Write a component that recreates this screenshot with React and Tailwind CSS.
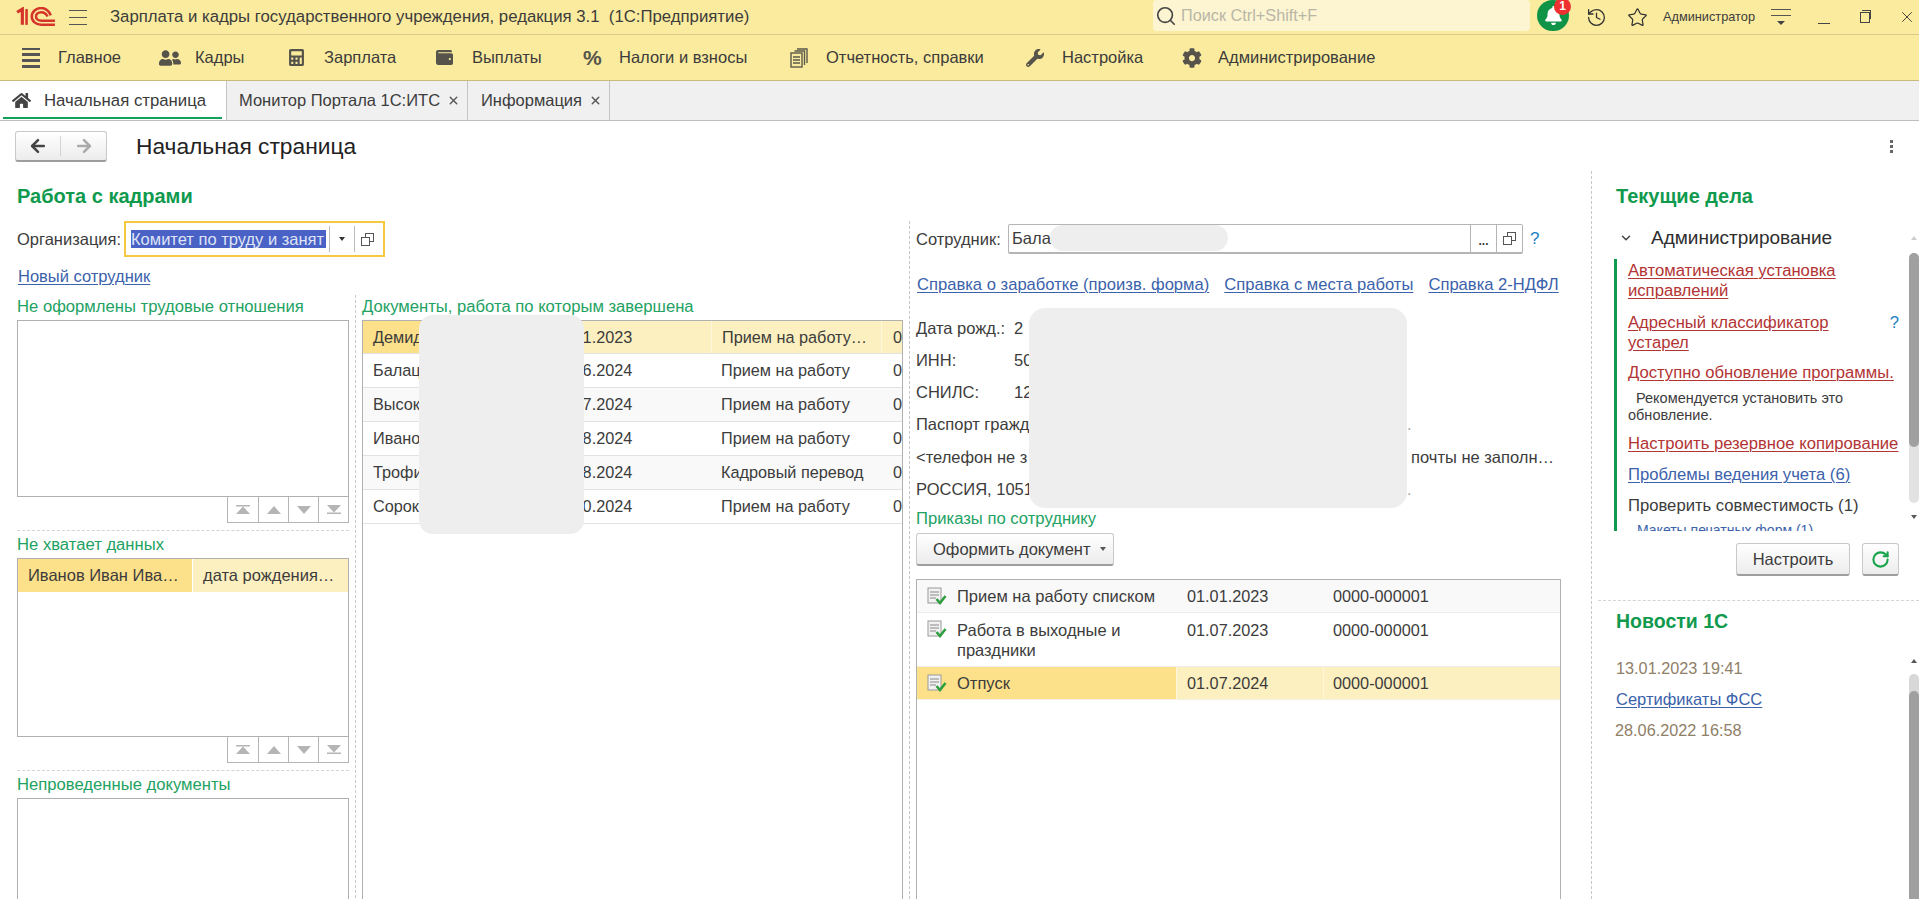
import React from 'react';
import { FaUserFriends, FaCalculator, FaWallet, FaWrench, FaCog, FaHome, FaBell } from 'react-icons/fa';
import { History, Star, Search, X, ArrowLeft, ArrowRight, RotateCw, ChevronDown } from 'lucide-react';

const sections = [
  { label: 'Главное', w: 'w-[159px]', icon: <Burger /> },
  { label: 'Кадры', w: 'w-[129px]', icon: <FaUserFriends size={22} /> },
  { label: 'Зарплата', w: 'w-[148px]', icon: <FaCalculator size={17} /> },
  { label: 'Выплаты', w: 'w-[147px]', icon: <FaWallet size={17} /> },
  { label: 'Налоги и взносы', w: 'w-[207px]', icon: <span className="text-[21px] font-bold leading-none">%</span> },
  { label: 'Отчетность, справки', w: 'w-[236px]', icon: <ReportIcon /> },
  { label: 'Настройка', w: 'w-[156px]', icon: <FaWrench size={18} /> },
  { label: 'Администрирование', w: 'w-[220px]', icon: <FaCog size={20} /> },
];

const finished = [
  ['Демид', '01.01.2023', 'Прием на работу…'],
  ['Балац', '01.06.2024', 'Прием на работу'],
  ['Высок', '01.07.2024', 'Прием на работу'],
  ['Иванов', '01.08.2024', 'Прием на работу'],
  ['Трофи', '01.08.2024', 'Кадровый перевод'],
  ['Сорок', '01.10.2024', 'Прием на работу'],
];

function Burger() {
  return (
    <div className="flex flex-col gap-[3px] w-[18px]">
      <div className="h-[2px] bg-[#555]" />
      <div className="h-[3px] bg-[#555]" />
      <div className="h-[3px] bg-[#555]" />
      <div className="h-[3px] bg-[#555]" />
    </div>
  );
}

function ReportIcon() {
  return (
    <svg width="18" height="20" viewBox="0 0 18 20" fill="none" stroke="#5c5a4c" strokeWidth="1.4">
      <path d="M7 1h10v14M4.5 3h10v14" />
      <rect x="1" y="5" width="11" height="14" fill="#fbeb9e" />
      <path d="M3 9h7M3 12h7M3 15h7" />
    </svg>
  );
}

function Logo1C() {
  return (
    <svg width="40" height="21" viewBox="0 0 38 20" fill="none" stroke="#d4342a" strokeWidth="2.4">
      <path d="M1 5l5-3v15" strokeWidth="3" />
      <path d="M10 2v15" />
      <path d="M33 8c-1-4-5-7-9-7-5 0-9 3.500-9 8s4 8 9 8h13" />
      <path d="M30 9c-1-2-3-4-6-4-3 0-5 2-5 4s2 4 5 4h13" />
    </svg>
  );
}

function DocIcon() {
  return (
    <svg width="20" height="18" viewBox="0 0 20 18" className="shrink-0">
      <rect x="1" y="1" width="13" height="15" fill="#f1f1f1" stroke="#9a9a9a" />
      <path d="M3 5h9M3 8h9M3 11h6" stroke="#8a8a8a" strokeWidth="1.2" />
      <path d="M9.500 12l3.500 4 5.500-7" fill="none" stroke="#2f9e3f" strokeWidth="2.6" />
    </svg>
  );
}

function CopyIcon() {
  return (
    <svg width="13" height="13" viewBox="0 0 13 13" fill="none" stroke="#555" strokeWidth="1">
      <rect x="4.500" y="0.500" width="8" height="8" />
      <rect x="0.500" y="4.500" width="8" height="8" fill="#fff" />
    </svg>
  );
}

function PageButtons() {
  const glyphs = [
    <svg key="a" width="14" height="9" viewBox="0 0 14 9" fill="#b5b5b5"><path d="M0 0h14v1.500H0zM7 1.500L14 9H0z" /></svg>,
    <svg key="b" width="14" height="8" viewBox="0 0 14 8" fill="#b5b5b5"><path d="M7 0l7 8H0z" /></svg>,
    <svg key="c" width="14" height="8" viewBox="0 0 14 8" fill="#b5b5b5"><path d="M0 0h14L7 8z" /></svg>,
    <svg key="d" width="14" height="9" viewBox="0 0 14 9" fill="#b5b5b5"><path d="M0 0h14L7 7.500zM0 7.500h14V9H0z" /></svg>,
  ];
  return (
    <div className="flex justify-end">
      <div className="flex h-[26px] border border-t-0 border-[#b5b5b5]">
        {glyphs.map((g, i) => (
          <div key={i} className={`w-[30px] flex items-center justify-center ${i > 0 ? 'border-l border-[#b5b5b5]' : ''}`}>{g}</div>
        ))}
      </div>
    </div>
  );
}

function GreenLabel({ children, className = '' }) {
  return <div className={`h-[23px] leading-[19px] text-[#22a262] text-[16.65px] ${className}`}>{children}</div>;
}

function Link({ children, className = '' }) {
  return <a className={`text-[#3b62ab] underline underline-offset-2 decoration-1 ${className}`}>{children}</a>;
}

function GreyButton({ children, className = '' }) {
  return (
    <div className={`flex items-center rounded-[3px] border border-[#c9c9c9] border-b-[#9e9e9e] border-b-2 bg-gradient-to-b from-white to-[#ececec] ${className}`}>
      {children}
    </div>
  );
}

function Scrollbar({ className = '', children }) {
  return <div className={`w-[10px] flex flex-col items-center ${className}`}>{children}</div>;
}

export default function App() {
  return (
    <div className="w-full h-[899px] overflow-hidden flex flex-col bg-white text-[#3c3c3c] text-[16.5px] font-['Liberation_Sans',Arial,sans-serif]">
      {/* Title bar */}
      <div className="h-[35px] shrink-0 flex items-center bg-[#fbeb9e] border-b border-[#d9c98a]">
        <div className="ml-[16px] w-[40px] shrink-0"><Logo1C /></div>
        <div className="ml-[13px] w-[18px] shrink-0 flex flex-col gap-[6px]">
          <div className="h-px bg-[#555]" />
          <div className="h-px bg-[#555]" />
          <div className="h-px bg-[#555]" />
        </div>
        <div className="ml-[23px] w-[1043px] shrink-0 whitespace-pre text-[16.75px]">Зарплата и кадры государственного учреждения, редакция 3.1  (1С:Предприятие)</div>
        <div className="h-[31px] self-start w-[377px] shrink-0 rounded-sm bg-[#fdf5d2] flex items-center pl-[2px]">
          <Search size={22} strokeWidth={1.8} className="text-[#444]" />
          <span className="ml-[4px] text-[16.25px] text-[#b9b6a6]">Поиск Ctrl+Shift+F</span>
        </div>
        <div className="relative ml-[7px] w-[32px] h-[31px] shrink-0 self-start rounded-full bg-[#0f9447] flex items-center justify-center">
          <FaBell size={19} className="text-white" />
          <span className="absolute -top-[2px] -right-[2px] w-[17px] h-[17px] rounded-full bg-[#ee3030] text-white text-[12px] font-bold leading-[17px] text-center">1</span>
        </div>
        <History size={21} strokeWidth={1.5} className="ml-[17px] shrink-0 text-[#333]" />
        <Star size={21} strokeWidth={1.4} className="ml-[20px] shrink-0 text-[#333]" />
        <span className="ml-[15px] w-[108px] shrink-0 text-[12.75px]">Администратор</span>
        <div className="w-[20px] shrink-0 flex flex-col items-center gap-[5px]">
          <div className="h-px w-full bg-[#555]" />
          <div className="h-px w-full bg-[#555]" />
          <div className="w-0 h-0 border-x-[4px] border-x-transparent border-t-[4px] border-t-[#444]" />
        </div>
        <div className="ml-[27px] w-[12px] h-[1px] shrink-0 bg-[#444] mt-[12px]" />
        <div className="ml-[30px] relative w-[10px] h-[11px] shrink-0 border border-[#444] bg-[#fbeb9e]">
          <div className="absolute -top-[3px] left-[1px] w-[9px] h-[9px] border-t border-r border-[#444]" />
        </div>
        <X size={18} strokeWidth={1.2} className="ml-[28px] shrink-0 text-[#333]" />
      </div>

      {/* Sections panel */}
      <div className="h-[46px] shrink-0 flex items-center bg-[#fbeb9e] border-b border-[#c9bb7f]">
        {sections.map((s, i) => (
          <div key={s.label} className={`flex items-center h-full ${s.w} ${i === 0 ? 'pl-[22px]' : ''}`}>
            <div className="w-[36px] text-[#55534a] flex items-center">{s.icon}</div>
            <span>{s.label}</span>
          </div>
        ))}
      </div>

      {/* Tabs */}
      <div className="h-[40px] shrink-0 flex bg-[#f0f0f0] border-b border-[#bdbdbd]">
        <div className="w-[227px] bg-white border-r border-[#c4c4c4] flex items-center pl-[12px] relative text-[16.75px]">
          <FaHome size={19} className="text-[#444]" />
          <span className="ml-[13px]">Начальная страница</span>
          <div className="absolute left-[3px] right-[4px] bottom-[1px] h-[2px] bg-[#12a05a]" />
        </div>
        <div className="w-[241px] border-r border-[#c4c4c4] flex items-center pl-[12px]">
          <span>Монитор Портала 1С:ИТС</span>
          <X size={13} strokeWidth={2.6} className="ml-[7px] text-[#555]" />
        </div>
        <div className="w-[142px] border-r border-[#c4c4c4] flex items-center pl-[13px]">
          <span>Информация</span>
          <X size={13} strokeWidth={2.6} className="ml-[7px] text-[#555]" />
        </div>
      </div>

      {/* Page head */}
      <div className="h-[50px] shrink-0 flex items-center pl-[15px] pr-[26px]">
        <GreyButton className="w-[92px] h-[31px]">
          <div className="w-1/2 flex justify-center border-r border-[#d4d4d4]"><ArrowLeft size={20} strokeWidth={3} className="text-[#444]" /></div>
          <div className="w-1/2 flex justify-center"><ArrowRight size={20} strokeWidth={3} className="text-[#aaa]" /></div>
        </GreyButton>
        <h1 className="ml-[29px] text-[22.75px] text-[#222]">Начальная страница</h1>
        <div className="ml-auto flex flex-col gap-[2px]">
          <div className="w-[3px] h-[3px] bg-[#666]" />
          <div className="w-[3px] h-[3px] bg-[#666]" />
          <div className="w-[3px] h-[3px] bg-[#666]" />
        </div>
      </div>

      {/* Content */}
      <div className="flex-1 flex min-h-0">
        <div className="w-[1592px] shrink-0 flex flex-col border-r border-dashed border-[#c8c8c8]">
          <h2 className="h-[50px] pl-[17px] flex items-center text-[20px] font-bold text-[#109a4e]">Работа с кадрами</h2>
          <div className="flex-1 flex min-h-0">
            {/* Left block */}
            <div className="w-[910px] shrink-0 pl-[17px] border-r border-dashed border-[#c8c8c8]">
              <div className="h-[36px] flex items-center">
                <span className="w-[107px]">Организация:</span>
                <div className="w-[261px] h-[36px] border-2 border-[#f5c93f] flex items-center">
                  <span className="ml-[5px] w-[195px] h-[18px] leading-[18px] overflow-hidden whitespace-nowrap bg-[#4a62c6] text-[#dfe4f6]">Комитет по труду и занят</span>
                  <div className="ml-[3px] w-[26px] h-[26px] border-x border-[#bbb] flex items-center justify-center">
                    <div className="w-0 h-0 border-x-[3px] border-x-transparent border-t-[4px] border-t-[#333]" />
                  </div>
                  <div className="ml-[6px]"><CopyIcon /></div>
                </div>
              </div>
              <div className="h-[38px] flex items-center pl-px"><Link>Новый сотрудник</Link></div>
              <div className="flex">
                {/* Lists */}
                <div className="w-[339px] shrink-0 pr-[6px] pt-[2px] border-r border-dashed border-[#c8c8c8]">
                  <GreenLabel>Не оформлены трудовые отношения</GreenLabel>
                  <div className="h-[177px] border border-[#b0b0b0]" />
                  <PageButtons />
                  <div className="mt-[7px] border-t border-dashed border-[#d4d4d4] h-[3px]" />
                  <GreenLabel className="mt-[2px]">Не хватает данных</GreenLabel>
                  <div className="h-[179px] border border-[#b0b0b0]">
                    <div className="flex h-[33px] leading-[33px]">
                      <div className="w-[174px] bg-[#fde08a] pl-[10px] mr-px">Иванов Иван Ива…</div>
                      <div className="flex-1 bg-[#fdf0c0] pl-[10px]">дата рождения…</div>
                    </div>
                  </div>
                  <PageButtons />
                  <div className="mt-[7px] border-t border-dashed border-[#d4d4d4] h-[3px]" />
                  <GreenLabel className="mt-[2px]">Непроведенные документы</GreenLabel>
                  <div className="h-[150px] border border-[#b0b0b0]" />
                </div>
                {/* Finished documents */}
                <div className="ml-[6px] w-[541px] pt-[2px]">
                  <GreenLabel>Документы, работа по которым завершена</GreenLabel>
                  <div className="relative h-[600px] border border-[#b0b0b0] text-[16.25px]">
                    {finished.map((row, i) => (
                      <div key={row[0]} className={`flex ${i === 0 ? 'h-[33px]' : 'h-[34px]'} leading-[33px] border-b border-[#e2e2e2] ${i === 0 ? 'bg-[#fdf0c0]' : i % 2 === 0 ? 'bg-[#f9f9f9]' : 'bg-white'}`}>
                        <div className={`w-[178px] pl-[10px] ${i === 0 ? 'bg-[#fde08a]' : ''}`}>{row[0]}</div>
                        <div className="w-[170px] pl-[10px]">{row[1]}</div>
                        <div className={`w-[171px] pl-[10px] ${i === 0 ? 'border-x border-[#fff7dc]' : ''}`}>{row[2]}</div>
                        <div className="pl-[11px]">0</div>
                      </div>
                    ))}
                    <div className="absolute left-[56px] top-[-6px] w-[165px] h-[219px] rounded-[14px] bg-[#eeeeee]" />
                  </div>
                </div>
              </div>
            </div>

            {/* Employee block */}
            <div className="flex-1 pl-[6px] pt-[3px] min-w-0">
              <div className="flex items-center h-[30px]">
                <span className="w-[92px]">Сотрудник:</span>
                <div className="relative w-[515px] h-[30px] rounded-[2px] border border-[#b5b5b5] border-b-2 flex items-center pl-[3px]">
                  <span>Бала</span>
                  <div className="absolute left-[41px] top-0 w-[178px] h-[26px] rounded-[13px] bg-[#eeeeee]" />
                  <div className="ml-auto w-[26px] h-full border-l border-[#b5b5b5] flex items-center justify-center text-[12px] font-bold leading-none pt-1">...</div>
                  <div className="w-[26px] h-full border-l border-[#b5b5b5] flex items-center justify-center"><CopyIcon /></div>
                </div>
                <span className="ml-[7px] text-[#1d7fc4] text-[17px]">?</span>
              </div>
              <div className="mt-[19px] h-[20px] flex gap-[15px] pl-px whitespace-nowrap text-[16.6px]">
                <Link>Справка о заработке (произв. форма)</Link>
                <Link>Справка с места работы</Link>
                <Link>Справка 2-НДФЛ</Link>
              </div>
              <div className="relative mt-[19px] w-[640px]">
                <div className="h-[32px] leading-[32px] flex"><span className="w-[98px]">Дата рожд.:</span><span>2</span></div>
                <div className="h-[32px] leading-[32px] flex"><span className="w-[98px]">ИНН:</span><span>50</span></div>
                <div className="h-[32px] leading-[32px] flex"><span className="w-[98px]">СНИЛС:</span><span>12</span></div>
                <div className="h-[33px] leading-[33px] flex"><span className="w-[491px]">Паспорт гражд</span><span className="text-[#aaa]">.</span></div>
                <div className="h-[32px] leading-[32px] flex"><span>&lt;телефон не з</span><span className="ml-auto mr-[2px]">почты не заполн…</span></div>
                <div className="h-[32px] leading-[32px] flex"><span className="w-[491px]">РОССИЯ, 1051</span><span className="text-[#aaa]">.</span></div>
                <div className="absolute left-[113px] -top-[4px] w-[378px] h-[200px] rounded-[16px] bg-[#eeeeee]" />
              </div>
              <div className="mt-[4px] h-[20px] leading-[20px] text-[#22a262] text-[16.65px]">Приказы по сотруднику</div>
              <GreyButton className="mt-[4px] w-[198px] h-[33px] pl-[16px]">
                <span>Оформить документ</span>
                <div className="ml-[9px] w-0 h-0 border-x-[3px] border-x-transparent border-t-[4px] border-t-[#555]" />
              </GreyButton>
              <div className="mt-[13px] w-[645px] h-[400px] border border-[#b0b0b0]">
                <div className="flex h-[33px] leading-[33px] bg-[#f9f9f9] border-b border-[#ececec]">
                  <div className="w-[259px] flex items-center pl-[10px] gap-[10px]"><DocIcon /><span>Прием на работу списком</span></div>
                  <div className="w-[147px] pl-[11px] text-[16.25px]">01.01.2023</div>
                  <div className="pl-[10px] text-[16.25px]">0000-000001</div>
                </div>
                <div className="flex h-[54px] border-b border-[#ececec]">
                  <div className="w-[259px] flex pl-[10px] gap-[10px] pt-[7px] leading-[20px]"><DocIcon /><span>Работа в выходные и<br />праздники</span></div>
                  <div className="w-[147px] pl-[11px] pt-[7px] leading-[20px] text-[16.25px]">01.07.2023</div>
                  <div className="pl-[10px] pt-[7px] leading-[20px] text-[16.25px]">0000-000001</div>
                </div>
                <div className="flex h-[33px] leading-[33px] bg-[#fdf0c0] border-b border-[#f3f0e4]">
                  <div className="w-[259px] flex items-center pl-[10px] gap-[10px] bg-[#fde08a]"><DocIcon /><span>Отпуск</span></div>
                  <div className="w-[147px] pl-[10px] border-l border-[#fff7dc] text-[16.25px]">01.07.2024</div>
                  <div className="pl-[9px] border-l border-[#fff7dc] text-[16.25px]">0000-000001</div>
                </div>
              </div>
            </div>
          </div>
        </div>

        {/* Right panel */}
        <div className="flex-1 flex flex-col min-w-0">
          <div className="h-[429px] shrink-0 pl-[24px] relative">
            <h2 className="h-[50px] flex items-center text-[20px] font-bold text-[#109a4e]">Текущие дела</h2>
            <div className="h-[38px] flex items-center pl-[3px] pb-[4px]">
              <ChevronDown size={14} strokeWidth={2.5} className="text-[#444]" />
              <span className="ml-[18px] text-[19px] text-[#2e2e2e]">Администрирование</span>
            </div>
            <div className="flex h-[272px] -ml-[2px] text-[16.65px]">
              <div className="w-[295px] h-full border-l-[3px] border-[#0f9a50] pl-[11px] overflow-hidden relative">
                <div className="mt-[2px] leading-[20px] text-[#b23434] underline underline-offset-2 decoration-1">Автоматическая установка<br />исправлений</div>
                <div className="mt-[12px] leading-[20px] text-[#b23434] underline underline-offset-2 decoration-1 relative">Адресный классификатор<br />устарел<span className="absolute right-[10px] top-0 text-[#1d7fc4] no-underline inline-block">?</span></div>
                <div className="mt-[10px] leading-[20px] text-[#b23434] underline underline-offset-2 decoration-1 whitespace-nowrap">Доступно обновление программы.</div>
                <div className="mt-[7px] text-[14.5px] leading-[17px]"><span className="pl-[8px]">Рекомендуется установить это</span><br />обновление.</div>
                <div className="mt-[10px] leading-[20px] text-[#b23434] underline underline-offset-2 decoration-1 whitespace-nowrap">Настроить резервное копирование</div>
                <div className="mt-[11px] leading-[20px]"><Link>Проблемы ведения учета (6)</Link></div>
                <div className="mt-[11px] leading-[20px]">Проверить совместимость (1)</div>
                <div className="mt-[4px] pl-[9px] leading-[20px] text-[14px]"><Link>Макеты печатных форм (1)</Link></div>
              </div>
            </div>
            <Scrollbar className="absolute right-0 top-[59px] h-[290px]">
              <div className="w-0 h-0 border-x-[3px] border-x-transparent border-b-[4px] border-b-[#ccc] mt-[6px]" />
              <div className="mt-[13px] w-[10px] h-[250px] shrink-0 rounded-full bg-[#e2e2e2]">
                <div className="w-[10px] h-[194px] rounded-full bg-[#a0a0a0]" />
              </div>
              <div className="mt-[12px] w-0 h-0 border-x-[3px] border-x-transparent border-t-[4px] border-t-[#555]" />
            </Scrollbar>
            <div className="flex mt-[12px] pl-[120px] gap-[12px]">
              <GreyButton className="w-[114px] h-[33px] justify-center">Настроить</GreyButton>
              <GreyButton className="w-[37px] h-[33px] justify-center"><RotateCw size={19} strokeWidth={2.6} className="text-[#16a34a]" /></GreyButton>
            </div>
          </div>
          <div className="flex-1 ml-[6px] border-t border-dashed border-[#d4d4d4] pl-[18px] relative">
            <h2 className="h-[42px] flex items-center text-[19.5px] font-bold text-[#109a4e]">Новости 1С</h2>
            <div className="mt-[15px] text-[#8f8068] leading-[20px] text-[16.25px]">13.01.2023 19:41</div>
            <div className="mt-[11px] leading-[20px]"><Link>Сертификаты ФСС</Link></div>
            <div className="mt-[11px] -ml-px text-[#8f8068] leading-[20px] text-[16.25px]">28.06.2022 16:58</div>
            <Scrollbar className="absolute right-0 top-[58px] bottom-0">
              <div className="w-0 h-0 border-x-[3px] border-x-transparent border-b-[4px] border-b-[#555]" />
              <div className="mt-[11px] flex-1 w-[10px] rounded-t-full bg-[#d8d8d8] pt-[17px]">
                <div className="h-full rounded-t-full bg-[#a0a0a0]" />
              </div>
            </Scrollbar>
          </div>
        </div>
      </div>
    </div>
  );
}
